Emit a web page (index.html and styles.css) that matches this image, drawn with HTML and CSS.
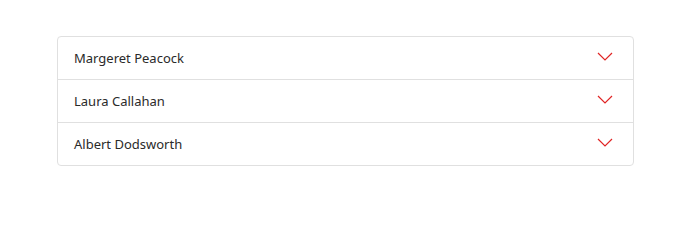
FILE: index.html
```html
<!DOCTYPE html>
<html>
<head>
<meta charset="utf-8">
<link rel="stylesheet" href="styles.css">
</head>
<body>
<div class="accordion">
  <div class="item">
    <span class="name">Margeret Peacock</span>
    <svg class="chev" width="16" height="9" viewBox="0 0 16 9"><path d="M1 1 L8 8 L15 1" fill="none" stroke="#e02424" stroke-width="1.2"/></svg>
  </div>
  <div class="item">
    <span class="name">Laura Callahan</span>
    <svg class="chev" width="16" height="9" viewBox="0 0 16 9"><path d="M1 1 L8 8 L15 1" fill="none" stroke="#e02424" stroke-width="1.2"/></svg>
  </div>
  <div class="item">
    <span class="name">Albert Dodsworth</span>
    <svg class="chev" width="16" height="9" viewBox="0 0 16 9"><path d="M1 1 L8 8 L15 1" fill="none" stroke="#e02424" stroke-width="1.2"/></svg>
  </div>
</div>
</body>
</html>
```
FILE: styles.css
```css
html, body {
  margin: 0;
  background: #fff;
}
body {
  padding: 36px 0 0 57px;
  font-family: "Noto Sans", "Open Sans", sans-serif;
  font-size: 13px;
  color: #2a2a2a;
}
.accordion {
  width: 575px;
  border: 1px solid #e0e0e0;
  border-radius: 4px;
}
.item {
  height: 42px;
  display: flex;
  align-items: center;
  justify-content: space-between;
  padding: 0 20px 0 16px;
  border-top: 1px solid #e0e0e0;
}
.item:first-child {
  border-top: none;
}
.chev {
  display: block;
  margin-top: -4px;
}
```
